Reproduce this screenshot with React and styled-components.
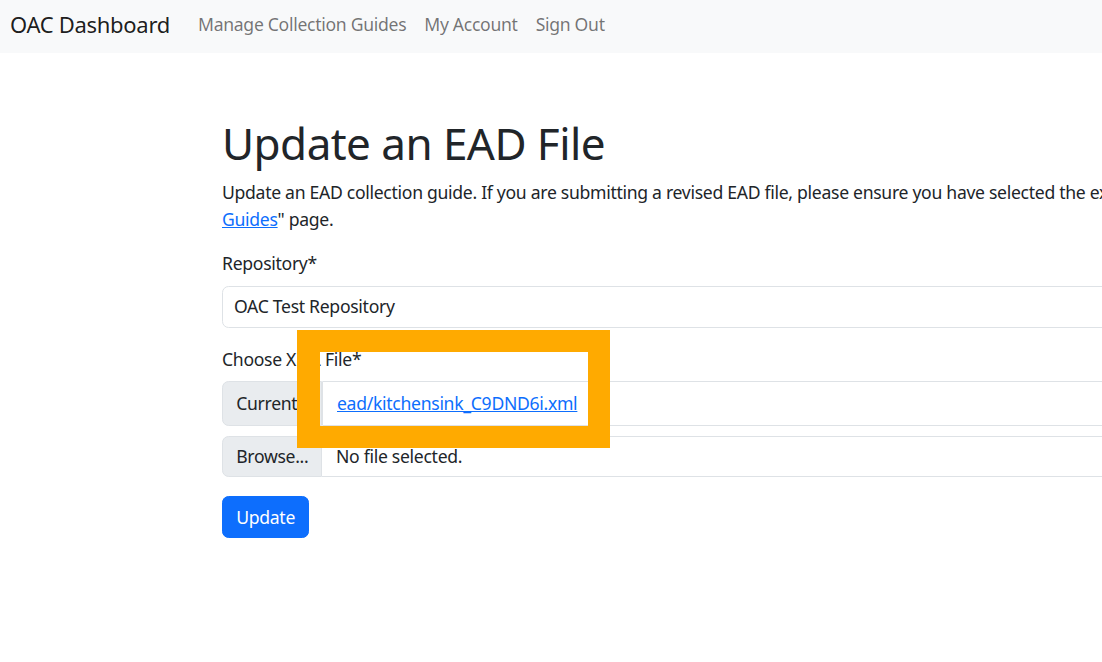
import React from "react";
import styled, { createGlobalStyle } from "styled-components";

const GlobalStyle = createGlobalStyle`
  html, body {
    margin: 0;
    padding: 0;
    background: #ffffff;
    overflow: hidden;
  }
  body {
    font-family: "Noto Sans", "Open Sans", sans-serif;
    font-size: 17.6px;
    line-height: 27px;
    letter-spacing: -0.3px;
    color: #212529;
  }
  * { box-sizing: border-box; }
`;

const Page = styled.div`
  position: relative;
  width: 1102px;
  height: 662px;
  overflow: hidden;
`;

const Navbar = styled.nav`
  display: flex;
  align-items: center;
  height: 53px;
  padding: 0 0 5px 10px;
  background: #f8f9fa;
`;

const Brand = styled.a`
  font-size: 22px;
  letter-spacing: -0.3px;
  color: rgba(0, 0, 0, 0.9);
  text-decoration: none;
  margin-right: 19px;
  white-space: nowrap;
`;

const NavList = styled.div`
  display: flex;
  align-items: center;
`;

const NavLink = styled.a`
  padding: 0 9px;
  color: rgba(0, 0, 0, 0.55);
  text-decoration: none;
  white-space: nowrap;
`;

const Container = styled.main`
  width: 1452px;
  margin-left: 210px;
  padding: 64px 12px 0;
`;

const Title = styled.h1`
  margin: 0 0 8.8px;
  font-size: 44px;
  font-weight: 400;
  line-height: 1.2;
  letter-spacing: -0.55px;
`;

const Lead = styled.p`
  margin: 0 0 17.6px;
`;

const Link = styled.a`
  color: #0d6efd;
  text-decoration: underline;
`;

const FormGroup = styled.div`
  margin-bottom: ${(p) => p.$mb || "17.6px"};
`;

const Label = styled.label`
  display: block;
  margin-bottom: 8.8px;
`;

const Select = styled.div`
  display: flex;
  align-items: center;
  height: 42px;
  padding: 0 11px;
  border: 1px solid #dee2e6;
  border-radius: 6.6px;
  background: #ffffff;
`;

const InputStack = styled.div`
  display: flex;
  flex-direction: column;
  gap: 10px;
`;

const InputGroup = styled.div`
  display: flex;
  height: ${(p) => p.$h}px;
`;

const Addon = styled.div`
  display: flex;
  align-items: center;
  width: 100px;
  flex: none;
  padding: 0 13.2px;
  background: #e9ecef;
  border: 1px solid #dee2e6;
  border-radius: 6.6px 0 0 6.6px;
  white-space: nowrap;
  overflow: hidden;
`;

const Field = styled.div`
  display: flex;
  align-items: center;
  flex: 1;
  padding: 0 14px;
  border: 1px solid #dee2e6;
  border-left-width: ${(p) => (p.$joined ? "0" : "1px")};
  border-radius: 0 6.6px 6.6px 0;
  background: #ffffff;
  white-space: nowrap;
`;

const Button = styled.button`
  height: 42px;
  padding: 0 13.2px;
  font: inherit;
  letter-spacing: inherit;
  color: #ffffff;
  background: #0d6efd;
  border: 1px solid #0d6efd;
  border-radius: 6.6px;
`;

const Highlight = styled.div`
  position: absolute;
  left: 297px;
  top: 330px;
  width: 313px;
  height: 118px;
  border: 22px solid #ffaa00;
  border-left-width: 23px;
  pointer-events: none;
`;

export default function App() {
  return (
    <>
      <GlobalStyle />
      <Page>
        <Navbar>
          <Brand href="#">OAC Dashboard</Brand>
          <NavList>
            <NavLink href="#">Manage Collection Guides</NavLink>
            <NavLink href="#">My Account</NavLink>
            <NavLink href="#">Sign Out</NavLink>
          </NavList>
        </Navbar>
        <Container>
          <Title>Update an EAD File</Title>
          <Lead>
            Update an EAD collection guide. If you are submitting a revised EAD
            file, please ensure you have selected the existing collection guide
            from the "<Link href="#">Manage Collection<br />Guides</Link>" page.
          </Lead>
          <FormGroup>
            <Label>Repository*</Label>
            <Select>OAC Test Repository</Select>
          </FormGroup>
          <FormGroup $mb="19px">
            <Label>Choose XML File*</Label>
            <InputStack>
              <InputGroup $h={45}>
                <Addon>Current</Addon>
                <Field>
                  <Link href="#">ead/kitchensink_C9DND6i.xml</Link>
                </Field>
              </InputGroup>
              <InputGroup $h={41}>
                <Addon>Browse...</Addon>
                <Field $joined>No file selected.</Field>
              </InputGroup>
            </InputStack>
          </FormGroup>
          <Button type="button">Update</Button>
        </Container>
        <Highlight />
      </Page>
    </>
  );
}
